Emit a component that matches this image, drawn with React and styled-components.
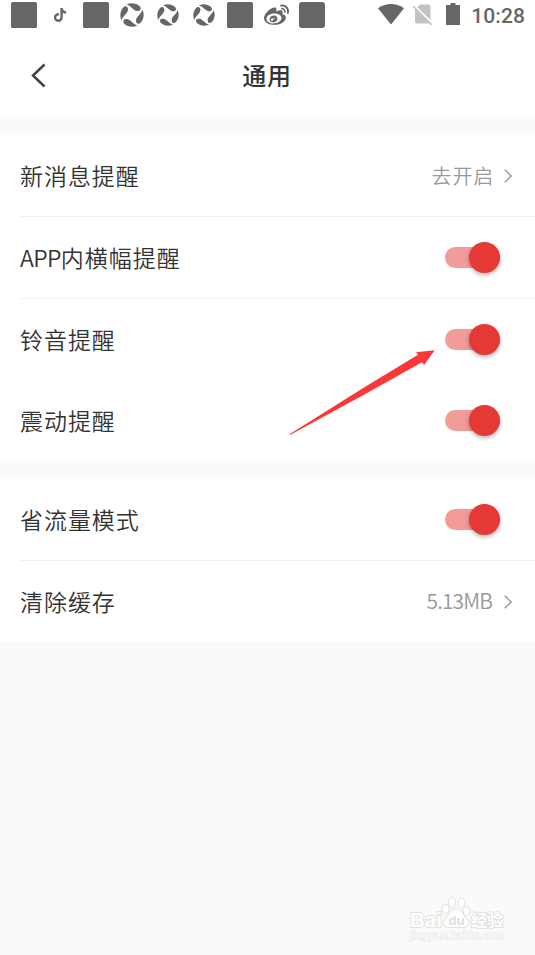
import React, { useState } from "react";
import styled, { createGlobalStyle } from "styled-components";
import { FaTiktok, FaWeibo } from "react-icons/fa";

const notifications = [
  "block",
  "tiktok",
  "block",
  "swirlLarge",
  "swirl",
  "swirl",
  "block",
  "weibo",
  "rounded",
];

const sections = [
  [
    { label: "新消息提醒", value: "去开启", divider: true },
    { prefix: "APP", label: "内横幅提醒", toggle: true, divider: true },
    { label: "铃音提醒", toggle: true },
    { label: "震动提醒", toggle: true },
  ],
  [
    { label: "省流量模式", toggle: true, divider: true },
    { label: "清除缓存", size: "5.13MB" },
  ],
];

const Swirl = ({ size }) => (
  <svg width={size} height={size} viewBox="0 0 24 24" fill="#666">
    {[0, 90, 180, 270].map((angle) => (
      <path
        key={angle}
        transform={`rotate(${angle} 12 12)`}
        d="M6.500 1.500C11 -.6 16.500 .1 20 3.600C21.200 5.200 20.800 7.200 19 7.800C17 8.400 15.200 7.700 13.700 6.400L10 3.300C9 2.400 8 1.800 6.500 1.500Z"
      />
    ))}
  </svg>
);

const NotificationIcon = ({ type }) => {
  if (type === "tiktok") return <FaTiktok size={14} />;
  if (type === "weibo") return <FaWeibo size={25} />;
  if (type === "swirl") return <Swirl size={22} />;
  if (type === "swirlLarge") return <Swirl size={24} />;
  return <Block $radius={type === "rounded" ? 3 : 1.5} />;
};

const StatusBar = () => (
  <Status>
    <Notifications>
      {notifications.map((type, index) => (
        <Cell key={index}>
          <NotificationIcon type={type} />
        </Cell>
      ))}
    </Notifications>
    <System>
      <svg width="26" height="21" viewBox="0 0 26 21">
        <path d="M0 4.200Q13-4.200 26 4.200L13 20.500Z" fill="#666" />
      </svg>
      <svg width="20" height="22" viewBox="0 0 20 22">
        <path d="M7 .5H15.500Q17.500 .5 17.500 2.500V17L4 3.500Z" fill="#c3c3c3" />
        <path d="M2 4.500L17 19.500H4Q2 19.500 2 17.500Z" fill="#c3c3c3" />
        <path d="M1.500 1.200L19.500 19.200" stroke="#fff" strokeWidth="1.500" />
        <path d="M.3 2.400L18.700 20.800" stroke="#c3c3c3" strokeWidth="1.700" />
      </svg>
      <svg width="14" height="22" viewBox="0 0 14 22">
        <path d="M4.500 0H9.500V2H14V22H0V2H4.500Z" fill="#666" />
      </svg>
      <Time>10:28</Time>
    </System>
  </Status>
);

const Toggle = () => {
  const [on, setOn] = useState(true);

  return (
    <Switch
      type="button"
      role="switch"
      aria-checked={on}
      $on={on}
      onClick={() => setOn(!on)}
    >
      <Thumb $on={on} />
    </Switch>
  );
};

const SettingRow = ({ prefix, label, value, size, toggle, divider }) => (
  <Row $divider={divider}>
    <Label>
      {prefix && <Prefix>{prefix}</Prefix>}
      {label}
    </Label>
    {toggle ? (
      <Toggle />
    ) : (
      <Value>
        {size ? <Size>{size}</Size> : <span>{value}</span>}
        <svg width="9" height="14" viewBox="0 0 9 14" fill="none">
          <path d="M.8 .7L7.200 7L.8 13.300" stroke="#929292" strokeWidth="1.300" />
        </svg>
      </Value>
    )}
  </Row>
);

const App = () => {
  return (
    <Page>
      <GlobalStyle />
      <StatusBar />
      <Header>
        <Back aria-label="返回">
          <svg width="15" height="25" viewBox="0 0 15 25" fill="none">
            <path d="M13.500 1.500L2 12.500L13.500 23.500" stroke="#444" strokeWidth="2.500" />
          </svg>
        </Back>
        <Title>通用</Title>
      </Header>
      {sections.map((rows, index) => (
        <Section key={index}>
          {rows.map((row) => (
            <SettingRow key={row.label} {...row} />
          ))}
        </Section>
      ))}
      <Arrow width="146" height="86" viewBox="0 0 146 86">
        <path d="M.5 84.200L75 37.500L129 4.700L127 2.300L145.700 .3L135.300 14.700L133 12.300L79 42.500L1 85Z" fill="#fb3838" />
      </Arrow>
      <Watermark>
        <svg width="100" height="48" viewBox="0 0 100 48">
          <g fill="#fff" stroke="#e0e0e0" strokeWidth="1">
            <ellipse cx="39.500" cy="15" rx="3.500" ry="4.500" />
            <ellipse cx="46" cy="8.500" rx="3.500" ry="5" />
            <ellipse cx="55.500" cy="8.500" rx="3.500" ry="5" />
            <ellipse cx="60.500" cy="17" rx="3.500" ry="4.500" />
            <path d="M50 15C56 15 57 21 60 24C66 29 62 34.500 56 33.500C52 33 48 33 44 33.500C37 34.500 35 29 40 24C43 21 44 15 50 15Z" />
          </g>
          <g fill="#fff" stroke="#e0e0e0" strokeWidth="1.800" paintOrder="stroke" fontFamily="Liberation Sans, sans-serif" fontWeight="700">
            <text x="4" y="33" fontSize="21" textLength="32" lengthAdjust="spacingAndGlyphs">Bai</text>
            <text x="65" y="32" fontSize="16" fontFamily="Noto Sans CJK SC, sans-serif" textLength="32">经验</text>
          </g>
          <text x="42.500" y="31" fontSize="13" fontFamily="Liberation Sans, sans-serif" fontWeight="700" fill="#dcdcdc">du</text>
          <text x="4" y="45" fontSize="10" fontFamily="DejaVu Sans, sans-serif" fill="#fff" stroke="#e9e9e9" strokeWidth="1.600" paintOrder="stroke" textLength="94" lengthAdjust="spacingAndGlyphs">jingyan.baidu.com</text>
        </svg>
      </Watermark>
    </Page>
  );
};

const GlobalStyle = createGlobalStyle`
  * {
    box-sizing: border-box;
  }

  body {
    margin: 0;
    background: #fafafa;
    font-family: "Noto Sans CJK SC", sans-serif;
    color: #333;
  }

  svg {
    display: block;
    flex: none;
  }
`;

const Page = styled.div`
  position: relative;
  width: 535px;
  height: 955px;
  overflow: hidden;
  background: #fafafa;
`;

const Status = styled.div`
  display: flex;
  justify-content: space-between;
  height: 34px;
  padding: 0 10px 0 6px;
  background: #fff;
  color: #666;
`;

const Notifications = styled.div`
  display: flex;
  height: 30px;
`;

const Cell = styled.div`
  display: flex;
  align-items: center;
  justify-content: center;
  width: 36px;
`;

const Block = styled.div`
  width: 26px;
  height: 26px;
  border-radius: ${({ $radius }) => $radius}px;
  background: #666;
`;

const System = styled.div`
  display: flex;
  align-items: center;
  height: 28px;

  svg:nth-child(2) {
    margin: 2px 0 0 9px;
  }

  svg:nth-child(3) {
    margin-left: 13px;
  }
`;

const Time = styled.span`
  margin: 4px 0 0 11px;
  font: 500 21px/28px Roboto, sans-serif;
  letter-spacing: 0.1px;
`;

const Header = styled.header`
  display: grid;
  grid-template-columns: 60px 1fr 60px;
  align-items: center;
  height: 83px;
  background: #fff;
`;

const Back = styled.button`
  padding: 0 0 0 31px;
  border: 0;
  background: none;
`;

const Title = styled.h1`
  margin: 0 1px 2px 0;
  font-size: 24px;
  font-weight: 500;
  line-height: 36px;
  letter-spacing: 0.8px;
  text-align: center;
`;

const Section = styled.section`
  margin-top: 18px;
  background: #fff;
`;

const Row = styled.div`
  display: flex;
  align-items: center;
  justify-content: space-between;
  height: ${({ $divider }) => ($divider ? 82 : 81)}px;
  margin-left: 20px;
  padding-right: 22px;
  border-bottom: ${({ $divider }) => ($divider ? "1px solid #f2f2f2" : "0")};
`;

const Label = styled.span`
  margin-bottom: 1px;
  font-size: 23px;
  font-weight: 350;
  line-height: 36px;
  letter-spacing: 0.95px;
`;

const Prefix = styled.span`
  letter-spacing: -0.6px;
`;

const Value = styled.div`
  display: flex;
  align-items: center;
  gap: 10px;
  font-size: 20px;
  font-weight: 350;
  line-height: 30px;
  letter-spacing: 0.8px;
  color: #999;
`;

const Size = styled.span`
  margin: 0 2px 3px 0;
  font-size: 21px;
  letter-spacing: -0.9px;
`;

const Switch = styled.button`
  display: flex;
  align-items: center;
  justify-content: ${({ $on }) => ($on ? "flex-end" : "flex-start")};
  width: 55px;
  height: 21px;
  margin-right: 13px;
  padding: 0;
  border: 0;
  border-radius: 11px;
  background: ${({ $on }) => ($on ? "#f29b99" : "#ccc")};
`;

const Thumb = styled.span`
  flex: none;
  width: 31px;
  height: 31px;
  border-radius: 50%;
  background: ${({ $on }) => ($on ? "#e53935" : "#fff")};
  box-shadow: 0 2px 4px rgba(0, 0, 0, 0.3);
`;

const Arrow = styled.svg`
  position: absolute;
  top: 350px;
  left: 289px;
  pointer-events: none;
`;

const Watermark = styled.div`
  position: absolute;
  top: 894px;
  left: 406px;
`;

export default App;
